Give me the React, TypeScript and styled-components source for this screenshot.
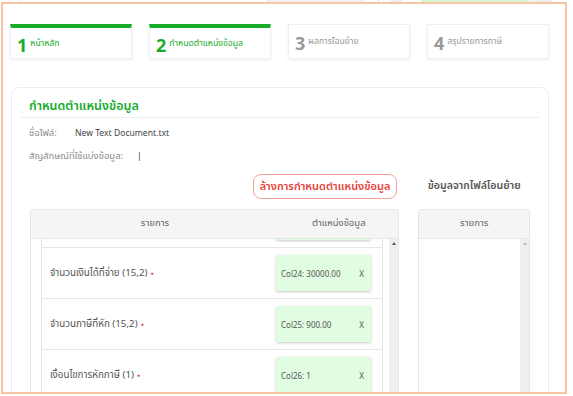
import styled, { createGlobalStyle } from "styled-components";

const GlobalStyle = createGlobalStyle`
  html, body {
    margin: 0;
    padding: 0;
    background: #ffffff;
  }
  body {
    font-family: "Noto Sans Thai", "Noto Sans", "Liberation Sans", sans-serif;
    color: #555;
  }
`;

const green = "#16ad2a";
const line = "#e6e6e6";

const TopStrip = styled.div`
  display: flex;
  height: 2px;
  padding-left: 9px;
`;

const StripBit = styled.div<{ $w: number; $ml: number; $bg: string }>`
  width: ${(p) => p.$w}px;
  margin-left: ${(p) => p.$ml}px;
  background: ${(p) => p.$bg};
`;

const Frame = styled.div`
  margin-left: 1px;
  width: 562px;
  height: 388px;
  border: 2px solid #f8c6a3;
  overflow: hidden;
  background: #fff;
`;

const Steps = styled.div`
  display: flex;
  gap: 17px;
  padding: 20px 0 0 7px;
`;

const StepCard = styled.div<{ $active?: boolean }>`
  box-sizing: border-box;
  width: 122px;
  height: 35px;
  display: flex;
  align-items: center;
  gap: 3px;
  padding: 0 6px;
  background: #fff;
  border: 1px solid #efefef;
  border-top: ${(p) => (p.$active ? `4px solid ${green}` : "1px solid #efefef")};
  box-shadow: 0 1px 3px rgba(0, 0, 0, 0.07);
  color: ${(p) => (p.$active ? green : "#999")};
`;

const StepNum = styled.span`
  font-family: "Open Sans", "Noto Sans", sans-serif;
  font-size: 18px;
  font-weight: 700;
  line-height: 1;
  margin-top: 3px;
`;

const StepLabel = styled.span`
  font-size: 8.7px;
  white-space: nowrap;
`;

const Panel = styled.div`
  margin: 28px 0 0 8px;
  width: 538px;
  box-sizing: border-box;
  border: 1px solid #ececec;
  border-radius: 8px;
  padding: 0 9px;
  height: 340px;
`;

const PanelTitle = styled.div`
  padding: 9px 8px 0;
  height: 20px;
  line-height: 20px;
  border-bottom: 1px solid #eeeeee;
  color: ${green};
  font-size: 12.5px;
  font-weight: 600;
`;

const Info = styled.div`
  padding: 6px 8px 0;
  display: flex;
  flex-direction: column;
  gap: 5px;
`;

const InfoRow = styled.div`
  display: flex;
  align-items: center;
  height: 18px;
  font-size: 9.5px;
  color: #8a8a8a;
`;

const InfoLabel = styled.span<{ $w: number }>`
  width: ${(p) => p.$w}px;
`;

const InfoValue = styled.span`
  color: #444;
  font-family: "Noto Sans", sans-serif;
  font-size: 8.6px;
`;

const Columns = styled.div`
  display: flex;
  gap: 19px;
  padding: 0 9px;
  margin-top: 8px;
`;

const LeftCol = styled.div`
  width: 371px;
  display: flex;
  flex-direction: column;
`;

const RightCol = styled.div`
  width: 112px;
  display: flex;
  flex-direction: column;
`;

const ActionRow = styled.div`
  height: 26px;
  display: flex;
  align-items: center;
  justify-content: flex-end;
  padding-right: 2px;
  margin-bottom: 10px;
`;

const ClearButton = styled.button`
  height: 25px;
  padding: 0 6px;
  border: 1px solid #f4a19a;
  border-radius: 8px;
  background: #fff;
  color: #e8423a;
  font-family: inherit;
  font-size: 11px;
  font-weight: 600;
`;

const SideHeading = styled.div`
  height: 26px;
  margin-bottom: 10px;
  display: flex;
  align-items: center;
  justify-content: center;
  font-size: 10.6px;
  font-weight: 600;
  color: #555;
  white-space: nowrap;
`;

const Table = styled.div`
  border: 1px solid ${line};
  border-radius: 3px 3px 0 0;
  height: 200px;
  display: flex;
  flex-direction: column;
`;

const Head = styled.div`
  height: 28px;
  display: flex;
  align-items: center;
  background: #f5f5f5;
  border-bottom: 1px solid ${line};
  font-size: 9.5px;
  line-height: 1.6;
  color: #666;
`;

const HeadCell = styled.div<{ $w?: number }>`
  ${(p) => (p.$w ? `width: ${p.$w}px;` : "flex: 1;")}
  text-align: center;
  white-space: nowrap;
`;

const Body = styled.div<{ $pad?: number }>`
  flex: 1;
  display: flex;
  padding-left: ${(p) => p.$pad ?? 0}px;
  overflow: hidden;
`;

const RowsView = styled.div`
  width: 340px;
  border-left: 1px solid ${line};
  border-right: 1px solid ${line};
  overflow: hidden;
`;

const RowsList = styled.div`
  margin-top: -42px;
`;

const Row = styled.div`
  height: 50px;
  border-bottom: 1px solid ${line};
  display: flex;
  align-items: center;
  justify-content: space-between;
  padding: 0 11px 0 8px;
`;

const RowLabel = styled.span`
  font-size: 9.8px;
  color: #555;
`;

const Required = styled.span`
  color: #e53935;
  font-size: 5px;
  margin-left: 3px;
  vertical-align: middle;
`;

const MapBox = styled.div`
  width: 95px;
  height: 36px;
  box-sizing: border-box;
  background: #e1fde1;
  border-radius: 2px;
  box-shadow: 0 1px 3px rgba(0, 0, 0, 0.22);
  display: flex;
  align-items: center;
  justify-content: space-between;
  padding: 0 7px 0 5px;
  font-family: "Noto Sans", sans-serif;
  font-size: 8px;
  color: #555;
`;

const Spacer = styled.div`
  flex: 1;
`;

const ScrollTrack = styled.div`
  width: 9px;
  background: #efefef;
  display: flex;
  justify-content: center;
  padding-top: 3px;
  box-sizing: border-box;
`;

const Arrow = styled.div<{ $light?: boolean }>`
  width: 0;
  height: 0;
  border-left: 2.5px solid transparent;
  border-right: 2.5px solid transparent;
  border-bottom: 3px solid ${(p) => (p.$light ? "#bbb" : "#555")};
`;

// first row is scrolled mostly out of view, only the bottom of its box shows
const rows = [
  { label: "", value: "" },
  { label: "จำนวนเงินได้ที่จ่าย (15,2)", value: "Col24: 30000.00" },
  { label: "จำนวนภาษีที่หัก (15,2)", value: "Col25: 900.00" },
  { label: "เงื่อนไขการหักภาษี (1)", value: "Col26: 1" },
];

const steps = [
  { n: 1, label: "หน้าหลัก", active: true },
  { n: 2, label: "กำหนดตำแหน่งข้อมูล", active: true },
  { n: 3, label: "ผลการโอนย้าย", active: false },
  { n: 4, label: "สรุปรายการภาษี", active: false },
];

export default function App() {
  return (
    <>
      <GlobalStyle />
      <TopStrip>
        <StripBit $w={1} $ml={0} $bg="#eee" />
        <StripBit $w={1} $ml={10} $bg="#eee" />
        <StripBit $w={99} $ml={245} $bg="#f1f1f1" />
        <StripBit $w={1} $ml={13} $bg="#e6e6e6" />
        <StripBit $w={11} $ml={12} $bg="#eeeeee" />
        <StripBit $w={108} $ml={19} $bg="#d8f5d4" />
        <StripBit $w={22} $ml={1} $bg="#eeeeee" />
      </TopStrip>
      <Frame>
        <Steps>
          {steps.map((s) => (
            <StepCard key={s.n} $active={s.active}>
              <StepNum>{s.n}</StepNum>
              <StepLabel>{s.label}</StepLabel>
            </StepCard>
          ))}
        </Steps>
        <Panel>
          <PanelTitle>กำหนดตำแหน่งข้อมูล</PanelTitle>
          <Info>
            <InfoRow>
              <InfoLabel $w={46}>ชื่อไฟล์:</InfoLabel>
              <InfoValue>New Text Document.txt</InfoValue>
            </InfoRow>
            <InfoRow>
              <InfoLabel $w={108}>สัญลักษณ์ที่ใช้แบ่งข้อมูล:</InfoLabel>
              <InfoValue>|</InfoValue>
            </InfoRow>
          </Info>
          <Columns>
            <LeftCol>
              <ActionRow>
                <ClearButton>ล้างการกำหนดตำแหน่งข้อมูล</ClearButton>
              </ActionRow>
              <Table>
                <Head>
                  <HeadCell $w={248}>รายการ</HeadCell>
                  <HeadCell>ตำแหน่งข้อมูล</HeadCell>
                </Head>
                <Body $pad={10}>
                  <RowsView>
                    <RowsList>
                      {rows.map((r, i) => (
                        <Row key={i}>
                          <RowLabel>
                            {r.label}
                            {r.label && <Required>●</Required>}
                          </RowLabel>
                          <MapBox>
                            {r.value && (
                              <>
                                <span>{r.value}</span>
                                <span>X</span>
                              </>
                            )}
                          </MapBox>
                        </Row>
                      ))}
                    </RowsList>
                  </RowsView>
                  <Spacer />
                  <ScrollTrack>
                    <Arrow />
                  </ScrollTrack>
                </Body>
              </Table>
            </LeftCol>
            <RightCol>
              <SideHeading>ข้อมูลจากไฟล์โอนย้าย</SideHeading>
              <Table>
                <Head>
                  <HeadCell>รายการ</HeadCell>
                </Head>
                <Body>
                  <Spacer />
                  <ScrollTrack>
                    <Arrow $light />
                  </ScrollTrack>
                </Body>
              </Table>
            </RightCol>
          </Columns>
        </Panel>
      </Frame>
    </>
  );
}
